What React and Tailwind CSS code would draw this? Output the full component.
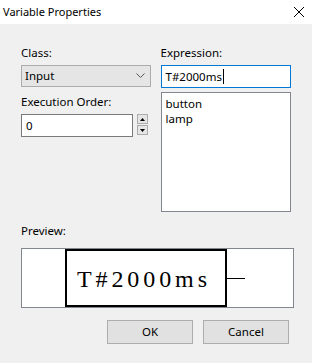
const font = { fontFamily: '"Noto Sans", "Liberation Sans", sans-serif' };

const App = () => {
  return (
    <div
      className="flex h-[363px] w-[312px] flex-col bg-[#f0f0f0] text-[11.5px] leading-4 text-black"
      style={font}
    >
      <div className="flex h-6 items-center justify-between bg-white pl-[3px] pr-[6px]">
        <span className="text-[11px]">Variable Properties</span>
        <svg width="12" height="12" viewBox="0 0 12 12" className="mr-[1px]">
          <path d="M1 1 L11 11 M11 1 L1 11" stroke="#000" strokeWidth="1" fill="none" />
        </svg>
      </div>

      <div className="flex flex-col px-[21px] pt-[21px]">
        <div className="flex gap-[10px]">
          <div className="flex w-[131px] flex-col">
            <span>Class:</span>
            <div className="mt-1 flex h-[22px] items-center justify-between border border-[#acacac] bg-[#e5e5e5] pl-[3px] pr-[5px]">
              <span>Input</span>
              <svg width="9" height="6" viewBox="0 0 9 6">
                <path d="M0.5 0.5 L4.5 4.5 L8.5 0.5" stroke="#555" strokeWidth="1" fill="none" />
              </svg>
            </div>
            <span className="mt-[7px]">Execution Order:</span>
            <div className="mt-1 flex items-start gap-1">
              <div className="flex h-[23px] w-[112px] items-center border border-[#7a7a7a] bg-white pl-[4px]">
                0
              </div>
              <div className="flex flex-col gap-[1px]">
                <div className="flex h-[10px] w-[11px] items-center justify-center border border-[#acacac] bg-[#e5e5e5]">
                  <svg width="5" height="3" viewBox="0 0 5 3">
                    <path d="M0 3 L2.5 0 L5 3 Z" fill="#000" />
                  </svg>
                </div>
                <div className="flex h-[10px] w-[11px] items-center justify-center border border-[#acacac] bg-[#e5e5e5]">
                  <svg width="5" height="3" viewBox="0 0 5 3">
                    <path d="M0 0 L5 0 L2.5 3 Z" fill="#000" />
                  </svg>
                </div>
              </div>
            </div>
          </div>

          <div className="flex w-[132px] flex-col">
            <span>Expression:</span>
            <div className="mt-1 flex h-[23px] items-center border border-[#0078d7] bg-white pl-[4px]">
              <span>T#2000ms</span>
              <span className="ml-[1px] h-[15px] w-px bg-black" />
            </div>
            <div className="mt-1 flex h-[120px] flex-col border border-[#828790] bg-white px-[4px] pt-[3px]">
              <span className="h-[15px] leading-[15px]">button</span>
              <span className="h-[15px] leading-[15px]">lamp</span>
            </div>
          </div>
        </div>

        <span className="mt-[11px]">Preview:</span>
        <div className="mt-[9px] flex h-[60px] w-[273px] items-center border border-[#828790] bg-white">
          <div className="w-[43px]" />
          <div className="flex h-[58px] w-[162px] items-center border-2 border-black pl-[10px] pt-[1px]">
            <span
              className="text-[24px] leading-none tracking-[3.9px]"
              style={{ fontFamily: '"Liberation Serif", "Courier New", serif' }}
            >
              T#2000ms
            </span>
          </div>
          <div className="h-px w-[18px] bg-black" />
        </div>
      </div>

      <div className="mt-[12px] flex justify-end gap-[10px] pr-[23px]">
        <button className="h-6 w-[86px] border border-[#adadad] bg-[#e1e1e1]">OK</button>
        <button className="h-6 w-[86px] border border-[#adadad] bg-[#e1e1e1]">Cancel</button>
      </div>
    </div>
  );
};

export default App;
